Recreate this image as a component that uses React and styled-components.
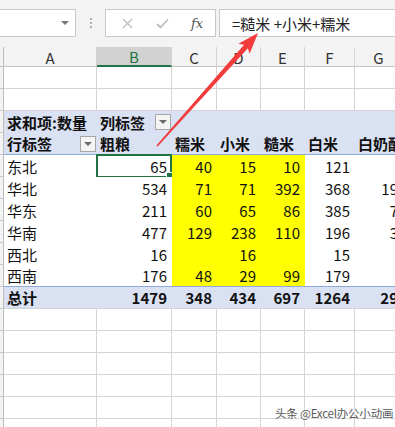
import React from "react";
import styled, { createGlobalStyle } from "styled-components";

const GlobalStyle = createGlobalStyle`
  html, body { margin: 0; padding: 0; background: #fff; overflow: hidden; }
  * { box-sizing: border-box; }
`;

const FONT = `"Noto Sans CJK SC", "Noto Sans", sans-serif`;
const GRID = "#d4d4d4";
const BLUE = "#8ea9db";
const LAV = "#d9e1f2";
const YEL = "#ffff00";

const Root = styled.div`
  position: relative;
  width: 395px;
  height: 427px;
  overflow: hidden;
  font-family: ${FONT};
  color: #111;
  background: #fff;
`;

const FormulaBar = styled.div`
  height: 47px;
  background: #f3f3f3;
  display: flex;
  align-items: flex-start;
  padding-top: 9px;
`;

const NameBox = styled.div`
  width: 77px;
  height: 28px;
  margin-left: -1px;
  background: #fff;
  border: 1px solid #c9c9c9;
  display: flex;
  align-items: center;
  justify-content: flex-end;
  padding-right: 6px;
`;

const Caret = styled.div`
  width: 0;
  height: 0;
  border-left: 4px solid transparent;
  border-right: 4px solid transparent;
  border-top: 4px solid #7a7a7a;
`;

const Grip = styled.div`
  width: 2px;
  margin: 9px 13px 0 14px;
  display: flex;
  flex-direction: column;
  gap: 2px;
  span { display: block; width: 2px; height: 2px; background: #b0b0b0; }
`;

const FxBox = styled.div`
  width: 111px;
  height: 28px;
  background: #fff;
  border: 1px solid #c9c9c9;
  display: flex;
  align-items: center;
  padding-left: 12px;
`;

const FxIcon = styled.span`
  display: flex;
  align-items: center;
  justify-content: center;
  width: ${(p) => p.$w}px;
  color: ${(p) => p.$c};
  font-size: ${(p) => p.$fs}px;
  font-family: ${(p) => (p.$serif ? `"DejaVu Serif", "Liberation Serif", serif` : FONT)};
  font-style: ${(p) => (p.$serif ? "italic" : "normal")};
`;

const FormulaInput = styled.div`
  flex: 1;
  height: 28px;
  margin-left: 3px;
  background: #fff;
  border: 1px solid #c9c9c9;
  border-right: none;
  display: flex;
  align-items: center;
  padding-left: 12px;
  font-size: 15px;
  color: #222;
  white-space: pre;
`;

const Sheet = styled.div`
  display: flex;
  flex-direction: column;
`;

const Row = styled.div`
  display: flex;
  height: ${(p) => p.$h || 22}px;
  width: 420px;
`;

const RowHead = styled.div`
  width: 4px;
  flex: none;
  background: #f3f3f3;
  border-right: 1px solid #bdbdbd;
  border-bottom: 1px solid #c8c8c8;
`;

const ColHead = styled.div`
  width: ${(p) => p.$w}px;
  flex: none;
  display: flex;
  align-items: center;
  justify-content: center;
  font-size: 15px;
  color: ${(p) => (p.$sel ? "#217346" : "#333")};
  background: ${(p) => (p.$sel ? "#d2d2d2" : "#f3f3f3")};
  border-right: 1px solid #d4d4d4;
  border-bottom: ${(p) => (p.$sel ? "2px solid #217346" : "1px solid #c6c6c6")};
  padding-top: 1px;
`;

const Cell = styled.div`
  position: relative;
  width: ${(p) => p.$w}px;
  flex: none;
  display: flex;
  align-items: center;
  justify-content: ${(p) => (p.$right ? "flex-end" : p.$split ? "space-between" : "flex-start")};
  padding: ${(p) => (p.$right ? "0 5px 0 0" : p.$split ? "0 1px 0 3px" : "0 0 0 3px")};
  font-size: 15px;
  font-weight: ${(p) => (p.$bold ? 700 : 400)};
  white-space: nowrap;
  background: ${(p) => p.$bg || "#fff"};
  border-right: ${(p) => (p.$vline ? `1px solid ${GRID}` : "none")};
  border-bottom: ${(p) => (p.$hline ? `1px solid ${p.$hline}` : "none")};
`;

const DropBtn = styled.div`
  width: 16px;
  height: 16px;
  flex: none;
  background: #f4f4f4;
  border: 1px solid #a6a6a6;
  display: flex;
  align-items: center;
  justify-content: center;
  &::after {
    content: "";
    border-left: 4px solid transparent;
    border-right: 4px solid transparent;
    border-top: 4px solid #6b6b6b;
  }
`;

const Selection = styled.div`
  position: absolute;
  left: -1px;
  top: -1px;
  right: 0;
  bottom: -1px;
  border: 2px solid #217346;
  pointer-events: none;
  &::after {
    content: "";
    position: absolute;
    right: -4px;
    bottom: -4px;
    width: 6px;
    height: 6px;
    background: #217346;
    border: 1px solid #fff;
  }
`;

const Overlay = styled.svg`
  position: absolute;
  left: 0;
  top: 0;
  pointer-events: none;
`;

const Watermark = styled.div`
  position: absolute;
  left: 275px;
  top: 405px;
  font-size: 11.5px;
  color: #5a5a5a;
  letter-spacing: -0.2px;
  text-shadow: 0 0 2px #fff, 0 0 1px #fff;
  white-space: nowrap;
`;

// column widths (incl. right gridline)
const COLS = [
  { k: "A", w: 93 },
  { k: "B", w: 75 },
  { k: "C", w: 45 },
  { k: "D", w: 44 },
  { k: "E", w: 44 },
  { k: "F", w: 50 },
  { k: "G", w: 48 },
];

const data = [
  ["东北", "65", "40", "15", "10", "121", ""],
  ["华北", "534", "71", "71", "392", "368", "19"],
  ["华东", "211", "60", "65", "86", "385", "7"],
  ["华南", "477", "129", "238", "110", "196", "3"],
  ["西北", "16", "", "16", "", "15", ""],
  ["西南", "176", "48", "29", "99", "179", ""],
];
const total = ["总计", "1479", "348", "434", "697", "1264", "29"];
const heads = ["行标签", "粗粮", "糯米", "小米", "糙米", "白米", "白奶酪"];

function EmptyRow() {
  return (
    <Row>
      <RowHead />
      {COLS.map((c) => (
        <Cell key={c.k} $w={c.w} $vline $hline={GRID} />
      ))}
    </Row>
  );
}

export default function App() {
  // arrow geometry
  const tail = [157, 146];
  const tip = [258, 33];
  const dx = tip[0] - tail[0];
  const dy = tip[1] - tail[1];
  const len = Math.hypot(dx, dy);
  const ux = dx / len, uy = dy / len;
  const nx = -uy, ny = ux;
  const hl = 21;
  const bx = tip[0] - ux * hl, by = tip[1] - uy * hl;
  const nb = [bx + ux * 3, by + uy * 3];
  const pt = (x, y) => `${x.toFixed(1)},${y.toFixed(1)}`;
  const poly = [
    pt(tail[0] + nx * 0.8, tail[1] + ny * 0.8),
    pt(nb[0] + nx * 2.6, nb[1] + ny * 2.6),
    pt(bx + nx * 7.5, by + ny * 7.5),
    pt(tip[0], tip[1]),
    pt(bx - nx * 7.5, by - ny * 7.5),
    pt(nb[0] - nx * 2.6, nb[1] - ny * 2.6),
    pt(tail[0] - nx * 0.8, tail[1] - ny * 0.8),
  ].join(" ");

  return (
    <Root>
      <GlobalStyle />
      <FormulaBar>
        <NameBox>
          <Caret />
        </NameBox>
        <Grip>
          <span />
          <span />
          <span />
        </Grip>
        <FxBox>
          <FxIcon $w={18} $c="#bdbdbd" $fs={16}>
            <svg width="11" height="11" viewBox="0 0 11 11">
              <path d="M1 1L10 10M10 1L1 10" stroke="#bdbdbd" strokeWidth="1.3" fill="none" />
            </svg>
          </FxIcon>
          <FxIcon $w={17} />
          <FxIcon $w={18} $c="#bdbdbd" $fs={16}>
            <svg width="13" height="11" viewBox="0 0 13 11">
              <path d="M1 6L4.5 9.5L12 1.5" stroke="#bdbdbd" strokeWidth="1.8" fill="none" />
            </svg>
          </FxIcon>
          <FxIcon $w={17} />
          <FxIcon $w={18} $c="#555" $fs={13} $serif>
            fx
          </FxIcon>
        </FxBox>
        <FormulaInput>=糙米 +小米+糯米</FormulaInput>
      </FormulaBar>

      <Sheet>
        <Row $h={20}>
          <RowHead />
          {COLS.map((c) => (
            <ColHead key={c.k} $w={c.w} $sel={c.k === "B"}>
              {c.k}
            </ColHead>
          ))}
        </Row>
        <EmptyRow />
        <EmptyRow />

        <Row>
          <RowHead />
          <Cell $w={93} $bg={LAV} $bold>
            求和项:数量
          </Cell>
          <Cell $w={75} $bg={LAV} $bold $split>
            <span>列标签</span>
            <DropBtn />
          </Cell>
          {COLS.slice(2).map((c) => (
            <Cell key={c.k} $w={c.w} $bg={LAV} />
          ))}
        </Row>

        <Row>
          <RowHead />
          <Cell $w={93} $bg={LAV} $bold $split $hline={BLUE}>
            <span>{heads[0]}</span>
            <DropBtn />
          </Cell>
          {COLS.slice(1).map((c, i) => (
            <Cell key={c.k} $w={c.w} $bg={LAV} $bold $hline={BLUE}>
              {heads[i + 1]}
            </Cell>
          ))}
        </Row>

        {data.map((r, ri) => (
          <Row key={r[0]}>
            <RowHead />
            {COLS.map((c, ci) => (
              <Cell
                key={c.k}
                $w={c.w}
                $right={ci > 0}
                $bg={ci >= 2 && ci <= 4 ? YEL : "#fff"}
                $hline={ri === data.length - 1 ? BLUE : null}
              >
                {r[ci]}
                {ri === 0 && ci === 1 && <Selection />}
              </Cell>
            ))}
          </Row>
        ))}

        <Row>
          <RowHead />
          {COLS.map((c, ci) => (
            <Cell key={c.k} $w={c.w} $right={ci > 0} $bold $bg={LAV} $hline={GRID}>
              {total[ci]}
            </Cell>
          ))}
        </Row>

        <EmptyRow />
        <EmptyRow />
        <EmptyRow />
        <EmptyRow />
        <EmptyRow />
        <EmptyRow />
      </Sheet>

      <Overlay width="395" height="427" viewBox="0 0 395 427">
        <polygon points={poly} fill="#f23b3b" />
      </Overlay>

      <Watermark>头条 @Excel办公小动画</Watermark>
    </Root>
  );
}
